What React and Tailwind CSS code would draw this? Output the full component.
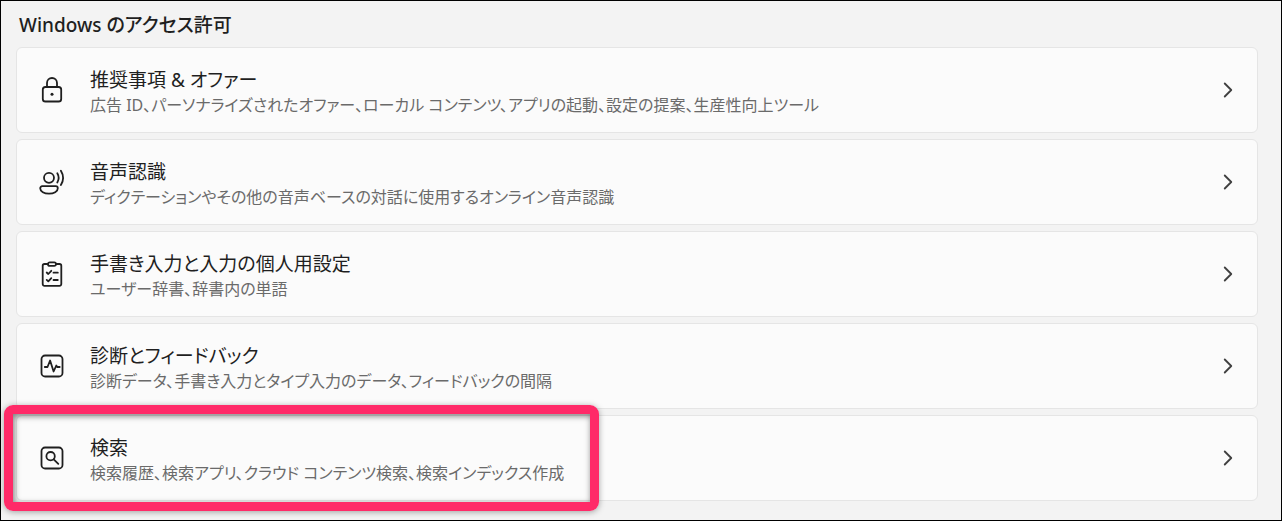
import React from 'react';
import { ChevronRight } from 'lucide-react';

function LockIcon() {
    return (
        <>
            <rect x="3.8" y="10" width="18.4" height="14.5" rx="2.6" />
            <path d="M8 10V6a5 5 0 0 1 10 0v4" />
            <circle cx="13" cy="17.2" r="1.5" fill="currentColor" stroke="none" />
        </>
    );
}

function SpeechIcon() {
    return (
        <>
            <circle cx="10" cy="8.8" r="5" />
            <path d="M3.2 17.2h13.6a2 2 0 0 1 2 2c0 3.4-4 5.5-8.8 5.5S1.2 22.6 1.2 19.2a2 2 0 0 1 2-2z" />
            <path d="M18.3 4.3a9 9 0 0 1 0 9.2" />
            <path d="M21.9 1.8a13.5 13.5 0 0 1 0 14.2" />
        </>
    );
}

function ClipboardIcon() {
    return (
        <>
            <path d="M9 3H5.5A1.8 1.8 0 0 0 3.7 4.8V23a1.8 1.8 0 0 0 1.8 1.8h15A1.8 1.8 0 0 0 22.3 23V4.8A1.8 1.8 0 0 0 20.5 3H17" />
            <rect x="9" y="1.3" width="8" height="3.6" rx="1.7" />
            <path d="M7.7 11.5l1.6 1.5 3-3.2M7.7 18.9l1.6 1.5 3-3.2M14.5 11.7h4.3M14.5 19h4.3" />
        </>
    );
}

function DiagnosticsIcon() {
    return (
        <>
            <rect x="2.5" y="2.5" width="21" height="21" rx="3.6" />
            <path d="M5.8 14h2.7l2.6-6.5 3.5 11 2.7-6 .9 1.5h2.5" />
        </>
    );
}

function SearchIcon() {
    return (
        <>
            <rect x="2.5" y="2.5" width="21" height="21" rx="3.6" />
            <circle cx="11.6" cy="11.2" r="4.2" />
            <path d="M14.7 14.3l4.6 4.6" />
        </>
    );
}

const items = [
    {
        title: '推奨事項 & オファー',
        description: '広告 ID、パーソナライズされたオファー、ローカル コンテンツ、アプリの起動、設定の提案、生産性向上ツール',
        icon: LockIcon,
    },
    {
        title: '音声認識',
        description: 'ディクテーションやその他の音声ベースの対話に使用するオンライン音声認識',
        icon: SpeechIcon,
    },
    {
        title: '手書き入力と入力の個人用設定',
        description: 'ユーザー辞書、辞書内の単語',
        icon: ClipboardIcon,
    },
    {
        title: '診断とフィードバック',
        description: '診断データ、手書き入力とタイプ入力のデータ、フィードバックの間隔',
        icon: DiagnosticsIcon,
    },
    {
        title: '検索',
        description: '検索履歴、検索アプリ、クラウド コンテンツ検索、検索インデックス作成',
        icon: SearchIcon,
        highlighted: true,
    },
];

function SettingsRow({ item }) {
    const Icon = item.icon;

    return (
        <li className="relative">
            <button
                type="button"
                className="flex w-full items-center rounded-md border border-[#e5e5e5] bg-[#fbfbfb] py-[15px] pl-[22px] pr-4 text-left"
            >
                <svg
                    viewBox="0 0 26 26"
                    className="mr-[25px] size-[26px] shrink-0 text-[#1f1f1f]"
                    fill="none"
                    stroke="currentColor"
                    strokeWidth="1.8"
                    strokeLinecap="round"
                    strokeLinejoin="round"
                    aria-hidden="true"
                >
                    <Icon />
                </svg>
                <span className="min-w-0 flex-1 pb-px pt-1">
                    <span className="block text-[19px] leading-[27px] text-[#1f1f1f]">{item.title}</span>
                    <span className="block text-[16px] leading-[22px] text-[#6a6a6a]">{item.description}</span>
                </span>
                <ChevronRight className="size-[26px] shrink-0 text-[#404040]" strokeWidth={1.7} aria-hidden="true" />
            </button>

            {/* Callout frame */}
            {item.highlighted && (
                <div className="pointer-events-none absolute -inset-y-[10px] -left-3 w-[595px] rounded-[9px] border-[9px] border-[#ff2a68] shadow-[0_1px_6px_rgba(0,0,0,0.35),inset_1px_2px_6px_rgba(0,0,0,0.5)]" />
            )}
        </li>
    );
}

export default function App() {
    return (
        <main className="min-h-screen border border-black bg-[#f3f3f3] pb-4 pl-[15px] pr-[23px] pt-[10px] font-['Noto_Sans','Noto_Sans_CJK_JP',sans-serif] [font-feature-settings:'palt']" lang="ja">
            <h1 className="mb-2 pl-[3px] text-[19px] font-medium leading-[28px] text-[#1f1f1f]">Windows のアクセス許可</h1>
            <ul className="flex flex-col gap-[6px]">
                {items.map((item) => (
                    <SettingsRow key={item.title} item={item} />
                ))}
            </ul>
        </main>
    );
}
